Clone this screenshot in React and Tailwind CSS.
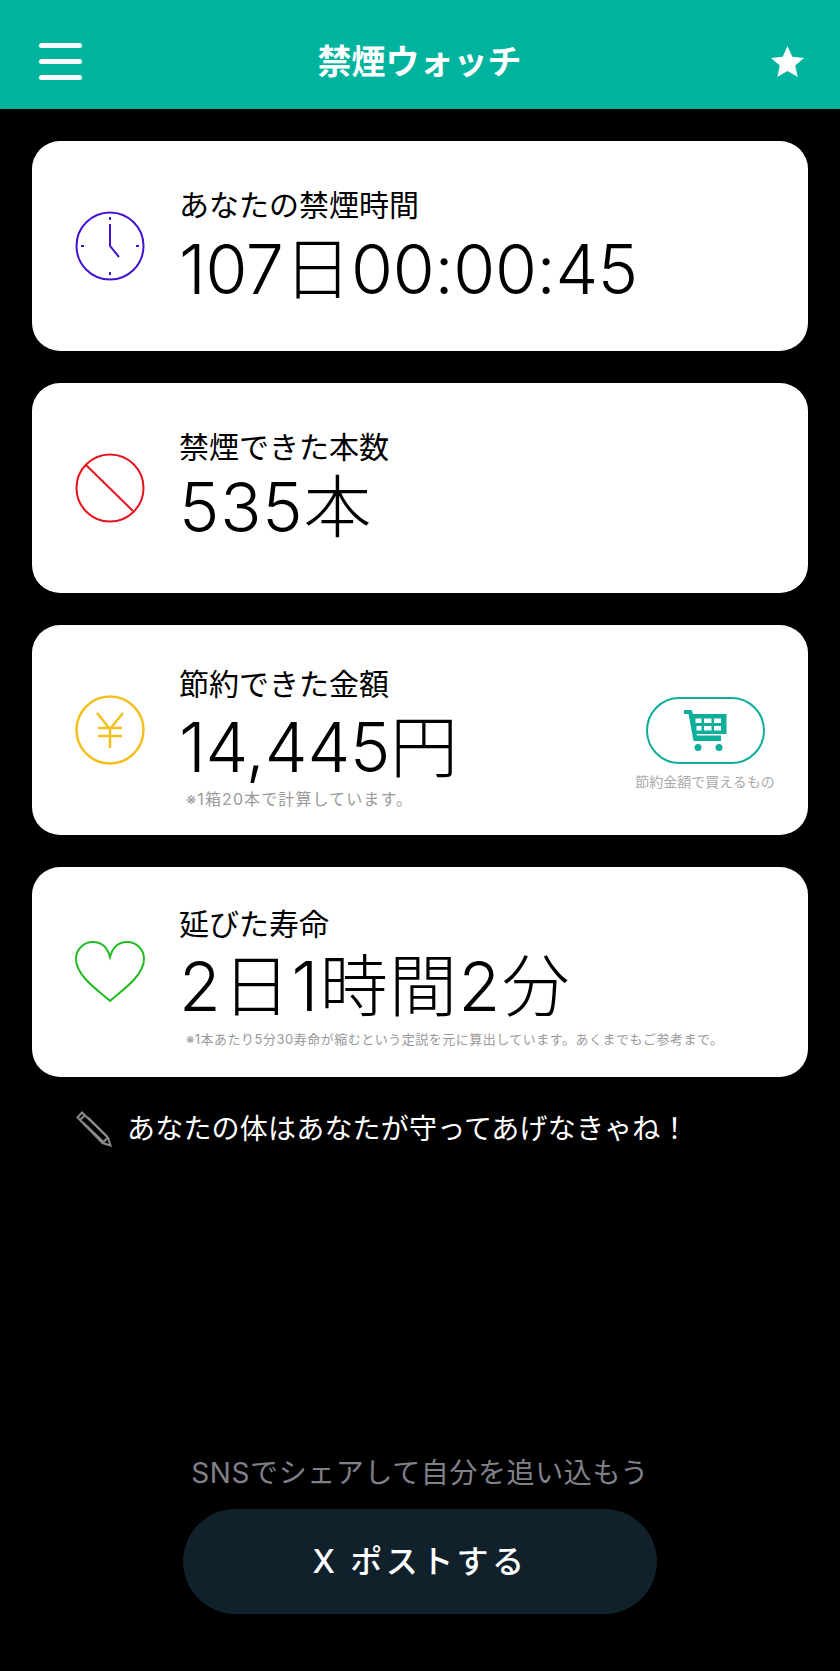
function StarIcon() {
  return (
    <svg width="33" height="31" viewBox="0 0 33 31" fill="#fff">
      <path d="M16.500 0l4.800 10.800L33 11.900l-8.800 7.700L26.700 31l-10.200-6-10.200 6 2.500-11.400L0 11.900l11.700-1.100z" />
    </svg>
  )
}

function ClockIcon() {
  return (
    <svg width="70" height="70" viewBox="0 0 70 70" fill="none" stroke="#4313cf" strokeWidth="2">
      <circle cx="35" cy="35" r="33.500" />
      <path d="M35 6v3M35 61v3M6 35h3M61 35h3" />
      <path d="M35 13v22l9 11" />
    </svg>
  )
}

function BanIcon() {
  return (
    <svg width="70" height="70" viewBox="0 0 70 70" fill="none" stroke="#e5141e" strokeWidth="2">
      <circle cx="35" cy="35" r="33.500" />
      <path d="M11 12l47 46" />
    </svg>
  )
}

function YenIcon() {
  return (
    <svg width="70" height="70" viewBox="0 0 70 70" fill="none" stroke="#f5bf1f" strokeWidth="2.500">
      <circle cx="35" cy="35" r="33.500" />
      <path d="M22 18l13 16 13-16M35 34v19M23 33h24M23 41h24" />
    </svg>
  )
}

function HeartIcon() {
  return (
    <svg width="70" height="62" viewBox="0 0 70 62" fill="none" stroke="#22bb22" strokeWidth="2">
      <path d="M35 60C24 50 1 35 1 18 1 8 9 1 18 1c8 0 14 4 17 15C38 5 44 1 52 1c9 0 17 7 17 17 0 17-23 32-34 42z" />
    </svg>
  )
}

function CartIcon() {
  return (
    <svg width="44" height="42" viewBox="0 0 44 42" fill="#0fae9b">
      <path d="M1 0h7.500l1.500 4H43.500v20H13.500l.5 1.500H38v5.500H10.500L5.500 4H1z" />
      <path fill="#fff" d="M12.500 8.500h6v4.500h-6zM21 8.500h7.500v4.500H21zM31 8.500h7v4.500h-7zM13.500 16h5v4.500h-5zM21 16h7.500v4.500H21zM31 16h7v4.500h-7z" />
      <circle cx="15" cy="37.500" r="3.500" />
      <circle cx="36" cy="37.500" r="3.500" />
    </svg>
  )
}

function PencilIcon() {
  return (
    <svg width="36" height="36" viewBox="0 0 36 36" fill="none" stroke="#8a8a8a" strokeWidth="2">
      <path d="M1.500 6.500L6 1.500l26 25 2.500 8-8-2.500z" />
      <path d="M4 9L9 4M26.500 32l5.500-5.500" />
      <path d="M7 11.500l21 20M12 6.500l19 19" />
    </svg>
  )
}

const cards = [
  {
    label: 'あなたの禁煙時間',
    value: '107日00:00:45',
    icon: <ClockIcon />,
    bodyClass: 'pt-[44px]',
    valueClass: 'mt-[4px] tracking-[-0.35px]',
  },
  {
    label: '禁煙できた本数',
    value: '535本',
    icon: <BanIcon />,
    bodyClass: 'pt-[44px]',
    valueClass: 'mt-0 tracking-[0.9px]',
  },
  {
    label: '節約できた金額',
    value: '14,445円',
    icon: <YenIcon />,
    bodyClass: 'pt-[39px]',
    valueClass: 'mt-[3px] tracking-[-0.2px]',
    note: '※1箱20本で計算しています。',
    noteClass: 'mt-[4px] text-[16px] tracking-[1.1px]',
    shop: true,
  },
  {
    label: '延びた寿命',
    value: '2日1時間2分',
    icon: <HeartIcon />,
    bodyClass: 'pt-[37px]',
    valueClass: 'mt-[2px] tracking-[1.4px]',
    note: '※1本あたり5分30寿命が縮むという定説を元に算出しています。あくまでもご参考まで。',
    noteClass: 'mt-[5px] text-[13px] tracking-[0.5px]',
  },
]

function StatCard({ item }) {
  return (
    <div className="relative flex h-[210px] items-center rounded-[28px] bg-white pl-[43px] text-black">
      <div className="flex w-[70px] shrink-0 justify-center">{item.icon}</div>
      <div className={`ml-[34px] flex h-full flex-col ${item.bodyClass}`}>
        <div className="text-[30px] leading-[40px] font-normal">{item.label}</div>
        <div className={`text-[68px] leading-[80px] font-light whitespace-nowrap ${item.valueClass}`}>{item.value}</div>
        {item.note && (
          <div className={`ml-[7px] leading-[16px] whitespace-nowrap text-[#999] ${item.noteClass}`}>{item.note}</div>
        )}
      </div>
      {item.shop && (
        <div className="absolute top-[72px] right-[33px] flex w-[140px] flex-col items-center">
          <div className="flex h-[67px] w-[119px] items-center justify-center rounded-full border-2 border-[#0fae9b]">
            <CartIcon />
          </div>
          <div className="mt-[9px] text-[14px] leading-[18px] text-[#aaa]">節約金額で買えるもの</div>
        </div>
      )}
    </div>
  )
}

export default function App() {
  return (
    <div className="flex min-h-screen flex-col bg-black font-['Inter','Noto_Sans_CJK_JP',sans-serif] text-white">
      <header className="flex h-[109px] items-center justify-between bg-[#00b39f] pt-[13px] pr-[36px] pl-[39px]">
        <div className="flex w-[43px] flex-col gap-[11px]">
          <span className="h-[5px] rounded-full bg-white" />
          <span className="h-[5px] rounded-full bg-white" />
          <span className="h-[5px] rounded-full bg-white" />
        </div>
        <h1 className="text-[34px] font-bold">禁煙ウォッチ</h1>
        <div className="flex w-[47px] justify-end">
          <StarIcon />
        </div>
      </header>

      <main className="flex flex-col gap-[32px] px-[32px] pt-[32px]">
        {cards.map((item) => (
          <StatCard key={item.label} item={item} />
        ))}
      </main>

      <div className="mt-[31px] flex items-center pl-[76px]">
        <PencilIcon />
        <span className="ml-[15px] text-[28px] font-normal tracking-[0.2px]">あなたの体はあなたが守ってあげなきゃね！</span>
      </div>

      <div className="mt-auto flex flex-col items-center pb-[57px]">
        <div className="text-[28px] leading-[36px] tracking-[0.6px] text-[#808088]">SNSでシェアして自分を追い込もう</div>
        <button className="mt-[18px] h-[105px] w-[474px] rounded-full bg-[#10212b] text-[32px] font-medium tracking-[3.400px] text-white">
          X ポストする
        </button>
      </div>
    </div>
  )
}
